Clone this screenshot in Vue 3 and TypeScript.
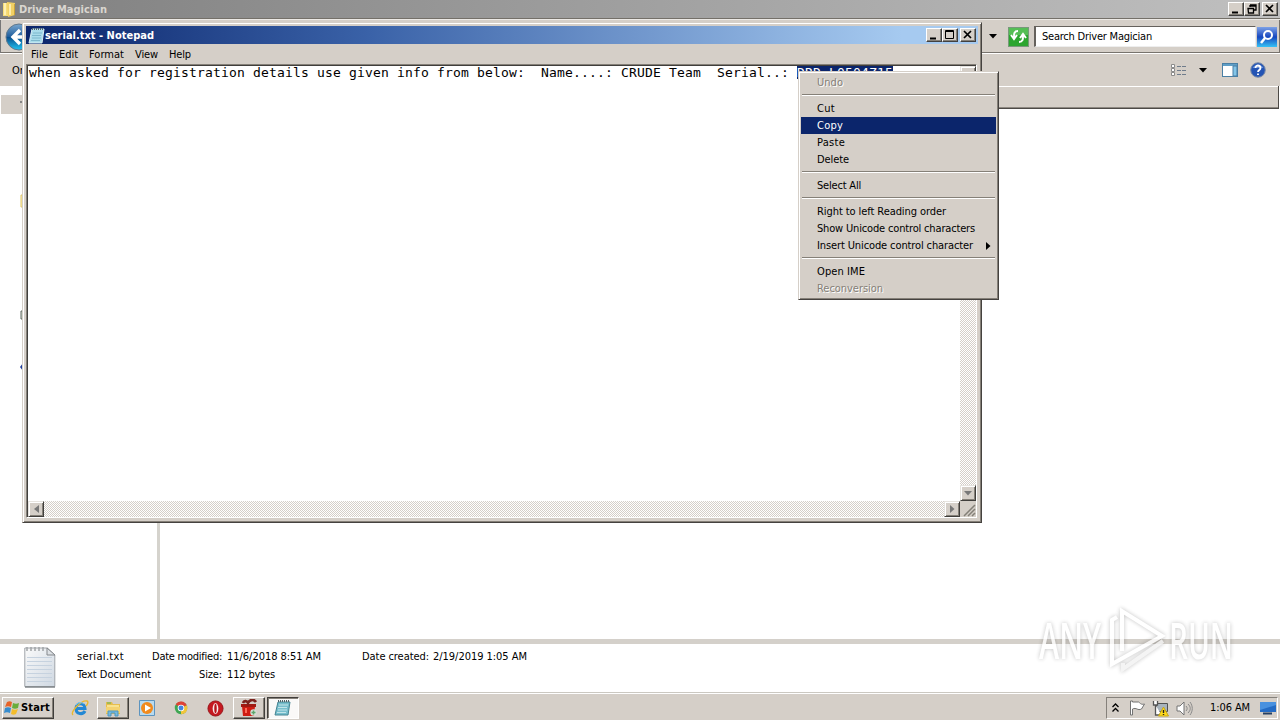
<script setup lang="ts">
interface MenuItem {
  label?: string
  width?: number
  state?: 'disabled' | 'active'
  submenu?: boolean
}

const contextMenu: MenuItem[] = [
  { label: 'Undo', width: 25, state: 'disabled' },
  {},
  { label: 'Cut', width: 17 },
  { label: 'Copy', width: 25, state: 'active' },
  { label: 'Paste', width: 27 },
  { label: 'Delete', width: 31 },
  {},
  { label: 'Select All', width: 43 },
  {},
  { label: 'Right to left Reading order', width: 128 },
  { label: 'Show Unicode control characters', width: 157 },
  { label: 'Insert Unicode control character', width: 155, submenu: true },
  {},
  { label: 'Open IME', width: 47 },
  { label: 'Reconversion', width: 65, state: 'disabled' },
]

const menuBar = [
  { label: 'File', width: 16 },
  { label: 'Edit', width: 18 },
  { label: 'Format', width: 34 },
  { label: 'View', width: 22 },
  { label: 'Help', width: 21 },
]

const bodyText =
  'when asked for registration details use given info from below:  Name....: CRUDE Team  Serial..: '
const selectedText = 'DRD-L0504Z15'

// Spreads letters so that a label takes the given width in pixels.
const vFit = {
  mounted(el: HTMLElement, binding: { value: number }) {
    const count = (el.textContent || '').length
    const natural = el.getBoundingClientRect().width
    el.style.letterSpacing = (binding.value + 1 - natural) / count + 'px'
  },
}
</script>

<template>
  <div class="screen">
    <section class="explorer">
      <header class="ex-title">
        <svg class="folder" width="14" height="16" viewBox="0 0 14 16">
          <path d="M1 2h5v13H1z" fill="#f6dc78" /><path d="M5 1l8 1v12l-7 2z" fill="#f1d064" />
          <path d="M3 2v12M8 3v11" stroke="#fff6c4" stroke-width="1.5" /><path d="M12.5 3v11" stroke="#c9a43c" />
        </svg>
        <b v-fit="87">Driver Magician</b>
        <div class="caps">
          <i class="cap"><svg width="16" height="14"><path d="M4 10.5h6" stroke="#000" stroke-width="2" /></svg></i>
          <i class="cap"><svg width="16" height="14"><path d="M6 3h6v5h-2M6 5V3M12 4H6M4 6.5h5.500V11h-5z" stroke="#000" fill="none" stroke-width="1.3" /></svg></i>
          <i class="cap gap"><svg width="16" height="14"><path d="M4 3l7 7M11 3l-7 7" stroke="#000" stroke-width="1.7" /></svg></i>
        </div>
      </header>
      <div class="ex-nav">
        <svg class="back" width="30" height="30" viewBox="0 0 30 30">
          <defs><linearGradient id="bk" x2="0" y2="1"><stop stop-color="#7aa8d0" /><stop offset=".48" stop-color="#215f9e" /><stop offset=".52" stop-color="#09508f" /><stop offset="1" stop-color="#22c5f3" /></linearGradient></defs>
          <circle cx="15" cy="15" r="13" fill="url(#bk)" stroke="#60788c" />
          <path d="M24 15H10M16 8l-7 7 7 7" stroke="#fff" stroke-width="3.400" fill="none" />
        </svg>
        <div class="nav-right">
          <svg class="drop" width="9" height="5"><path d="M0 0h8L4 4.500z" /></svg>
          <svg class="refresh" width="21" height="20" viewBox="0 0 21 20">
            <rect x=".5" y=".5" width="20" height="19" fill="#2ca52f" stroke="#77997a" />
            <path d="M1 1h19v7H1z" fill="#55be55" />
            <path d="M10 4C6 4 6 7 6 10M3 8l3 4 3-4M11 15c4 0 4-3 4-6M12 11l3-4 3 4" fill="none" stroke="#fff" stroke-width="2" />
          </svg>
          <div class="search"><span v-fit="109">Search Driver Magician</span></div>
          <svg class="go" width="20" height="20" viewBox="0 0 20 20">
            <defs><linearGradient id="go" x2="0" y2="1"><stop stop-color="#7da1e6" /><stop offset=".5" stop-color="#1747bf" /><stop offset="1" stop-color="#35c2f5" /></linearGradient></defs>
            <rect width="20" height="20" fill="url(#go)" /><circle cx="11" cy="8" r="4" fill="none" stroke="#fff" stroke-width="2" />
            <path d="M8 11l-4 5" stroke="#fff" stroke-width="2.500" />
          </svg>
        </div>
      </div>
      <div class="ex-tools">
        <span class="organize">Organize</span>
        <div class="tool-right">
          <svg width="16" height="13" viewBox="0 0 16 13">
            <path d="M.5 .5h3v3h-3zM.5 4.500h3v3h-3zM.5 8.500h3v3h-3z" fill="#fff" stroke="#8b8b8b" />
            <path d="M6 2.500h4M11 2.500h4M6 6.500h4M11 6.500h4M6 10.500h4M11 10.500h4" stroke="#6f7c8b" />
          </svg>
          <svg class="t-drop" width="9" height="5"><path d="M0 0h8L4 4.500z" /></svg>
          <svg class="t-pane" width="17" height="14" viewBox="0 0 17 14">
            <rect x=".5" y=".5" width="15" height="13" fill="#fff" stroke="#4a7fa4" /><path d="M1 2h14" stroke="#5f9ec6" stroke-width="2" /><path d="M11 3h4v10h-4z" fill="#83c5e8" stroke="#4a7fa4" />
          </svg>
          <svg width="16" height="16" viewBox="0 0 16 16">
            <circle cx="8" cy="8" r="7.300" fill="#2454b4" stroke="#7e8ea8" /><path d="M2.500 6a6 5 0 0 1 11 0z" fill="#6c92d8" />
            <path d="M5.500 6c0-3.500 5-3.200 5 0 0 2-2.500 2-2.500 4M8 11.500v1.500" stroke="#fff" fill="none" stroke-width="1.800" />
          </svg>
        </div>
      </div>
      <div class="ex-info"></div>
      <div class="ex-body">
        <aside class="tree">
          <i class="node"><i class="dot"></i></i>
          <svg class="bits" width="4" height="190" viewBox="0 0 4 190">
            <path d="M4 3H2v12h2" fill="#fff1b0" stroke="#dfc567" /><path d="M4 119H2v8h2" fill="#d6e0d4" stroke="#5b625b" /><path d="M4 171l-3 4 3 4z" fill="#1e3d9d" />
          </svg>
        </aside>
        <main class="files"></main>
      </div>
      <footer class="details">
        <svg class="doc" width="32" height="42" viewBox="0 0 32 42">
          <defs><linearGradient id="doc" x2="1" y2="1"><stop stop-color="#fafafa" /><stop offset="1" stop-color="#cfd8e2" /></linearGradient></defs>
          <path d="M.8 2h22.500l7.500 7v31.500H.8z" fill="url(#doc)" stroke="#9fa3a8" />
          <path d="M23 2v7h8z" fill="#dde1e5" stroke="#85898d" />
          <path d="M3 11.500h25M3 15.500h25M3 19.500h25M3 23.500h25M3 27.500h25M3 31.500h25M3 35.500h25" stroke="#c6d2df" />
          <path d="M3 1v4M7 1v4M11 1v4M15 1v4M19 1v4" stroke="#a1a5a8" stroke-width="1.500" /><path d="M1 41h30" stroke="#81868a" stroke-width="1.500" />
        </svg>
        <div class="col name"><span><em v-fit="46">serial.txt</em></span><span><em v-fit="73">Text Document</em></span></div>
        <div class="col keys"><span><em v-fit="69">Date modified:</em></span><span><em v-fit="22">Size:</em></span></div>
        <div class="col vals"><span><em v-fit="93">11/6/2018 8:51 AM</em></span><span><em v-fit="47">112 bytes</em></span></div>
        <div class="col keys2"><span><em v-fit="66">Date created:</em></span></div>
        <div class="col"><span><em v-fit="93">2/19/2019 1:05 AM</em></span></div>
      </footer>
    </section>

    <nav class="taskbar">
      <button class="start">
        <svg width="16" height="16" viewBox="0 0 16 16">
          <path d="M3 2c2-1 3-1 5 0L7 7c-2-1-4-1-6 0z" fill="#e76328" /><path d="M9 3c2 1 4 1 6 0l-1 5c-2 1-4 1-6 0z" fill="#69ad3b" />
          <path d="M1 8c2-1 4-1 6 0l-1 5c-2-1-4-1-6 0z" fill="#368cce" /><path d="M8 9c2 1 4 1 6 0l-2 5c-2 1-3 1-5 0z" fill="#f4bd2b" />
        </svg>
        <b v-fit="28">Start</b>
      </button>
      <div class="task ie">
        <svg width="18" height="18" viewBox="0 0 18 18">
          <path d="M14 12c-2 4-9 3.500-9-2.500s8.500-6.500 9 0H5" fill="none" stroke="#2388d4" stroke-width="3" />
          <path d="M2 16C-1 13 10 1 16 2c2 1 0 4-1 5" fill="none" stroke="#e9b82d" stroke-width="1.400" /><path d="M5 6c2-3 6-3 8-1" stroke="#75c9f1" fill="none" />
        </svg>
      </div>
      <div class="task raised">
        <svg width="18" height="18" viewBox="0 0 18 18">
          <path d="M2 3h6l1 2h7v10H2z" fill="#e7bd4d" /><path d="M3 6h12v8H3z" fill="#f8e28f" /><path d="M2 8h14v6H2z" fill="#f4d270" />
          <path d="M4 17v-5h10v5h-3v-3H7v3z" fill="#75b9df" stroke="#4c95bd" /><path d="M3 4h4" stroke="#5db45b" />
        </svg>
      </div>
      <div class="task">
        <svg width="18" height="18" viewBox="0 0 18 18">
          <path d="M1.500 1.500h15v15h-15z" fill="#b8daef" stroke="#5d94bf" /><circle cx="9" cy="9" r="6" fill="#f18a1d" /><path d="M7 5.500l6 3.500-6 3.500z" fill="#fff" />
        </svg>
      </div>
      <div class="task">
        <svg width="16" height="16" viewBox="0 0 18 18">
          <circle cx="9" cy="9" r="7" fill="#3fa652" /><path d="M9 9L3 5a7 7 0 0 1 12.500 1z" fill="#de4337" /><path d="M9 9l6.500-3A7 7 0 0 1 9 16z" fill="#f1c53b" />
          <circle cx="9" cy="9" r="3.700" fill="#fff" /><circle cx="9" cy="9" r="2.800" fill="#4385df" />
        </svg>
      </div>
      <div class="task">
        <svg width="17" height="17" viewBox="0 0 18 18">
          <circle cx="9" cy="9" r="8" fill="#c51920" stroke="#951318" /><ellipse cx="9" cy="9" rx="3" ry="5.800" fill="#f8eeee" /><ellipse cx="9" cy="9" rx="1.300" ry="5" fill="#b5141a" />
        </svg>
      </div>
      <div class="task raised">
        <svg width="18" height="18" viewBox="0 0 18 18">
          <path d="M2 7h13l-1 10H3z" fill="#cf1c12" /><path d="M1 5h15v3H1z" fill="#a01a12" /><path d="M3 4c1-3 4-2 5 0 2-4 6-4 8-1" stroke="#7b241e" stroke-width="2.600" fill="none" />
          <path d="M6 9v5" stroke="#ff6b57" stroke-width="2" /><circle cx="13.500" cy="13.500" r="3.200" fill="#d6dfd7" /><path d="M11.500 13.500h4M13.500 11.500v4" stroke="#5ca46a" stroke-width="1.500" />
        </svg>
      </div>
      <div class="task pressed">
        <svg width="18" height="18" viewBox="0 0 18 18">
          <path d="M4 3h12l-2 13H1z" fill="#78bfcd" stroke="#448492" /><path d="M5 6h9M4 8.500h9M4 11h9M3 13.500h9" stroke="#c2e4e9" /><path d="M4 2h12" stroke="#506267" stroke-width="2" stroke-dasharray="1 1" />
        </svg>
      </div>
      <div class="tray">
        <svg class="chev" width="7" height="10"><path d="M.5 4l3-3 3 3M.5 8.500l3-3 3 3" fill="none" stroke="#000" stroke-width="1.300" /></svg>
        <svg class="flag" width="17" height="16" viewBox="0 0 17 16"><path d="M1.500 1v14h2V9c4-2 5 2 9 0l3-5c-4 1-4-1-6-2H3.500V1z" fill="#fff" stroke="#737373" /></svg>
        <svg class="net" width="17" height="17" viewBox="0 0 17 17">
          <path d="M4.500 3.500h11v8h-11z" fill="#a8b3bc" stroke="#515151" /><path d="M1.500 1v4h4V1M3.500 5v10h6" fill="#fff" stroke="#555" stroke-width="1.300" /><path d="M11.500 7l5 9h-10z" fill="#ffd91c" stroke="#c6a616" /><path d="M11.500 10v3M11.500 14v1" stroke="#222" stroke-width="1.400" />
        </svg>
        <svg class="vol" width="17" height="15" viewBox="0 0 17 15"><path d="M1 5h3l4-4v13l-4-4H1z" fill="#fff" stroke="#737373" /><path d="M10 5c1.500 1.500 1.500 3.500 0 5M12 3c3 3 3 6 0 9M14 1c3 4 3 9 0 13" fill="none" stroke="#898989" /></svg>
        <span v-fit="39">1:06 AM</span>
        <svg class="desk" width="16" height="14" viewBox="0 0 16 14"><path d="M0 1h16v10H0z" fill="#246bc4" /><path d="M0 1h16v3L0 9z" fill="#4991df" /><path d="M3 12.500h9" stroke="#243f63" stroke-width="2" /></svg>
      </div>
    </nav>

    <section class="notepad">
      <header class="np-title">
        <svg width="17" height="17" viewBox="0 0 17 17">
          <path d="M4 2h12l-2 14H1z" fill="#a9dceb" stroke="#d9eef4" /><path d="M5 6h9M4 8.500h9M4 11h9M3 13.500h9" stroke="#7db8cd" /><path d="M4 2h12" stroke="#4d626a" stroke-width="2" stroke-dasharray="1 1" />
        </svg>
        <b v-fit="108">serial.txt - Notepad</b>
        <div class="caps">
          <i class="cap"><svg width="16" height="14"><path d="M4 10.500h6" stroke="#000" stroke-width="2" /></svg></i>
          <i class="cap"><svg width="16" height="14"><path d="M3.500 2.500h8v8h-8zM3 3.500h9" stroke="#000" fill="none" /></svg></i>
          <i class="cap gap"><svg width="16" height="14"><path d="M4 3l7 7M11 3l-7 7" stroke="#000" stroke-width="1.700" /></svg></i>
        </div>
      </header>
      <div class="np-menu"><div v-for="m in menuBar" :key="m.label"><span v-fit="m.width">{{ m.label }}</span></div></div>
      <div class="np-client">
        <div class="np-text"><span>{{ bodyText }}</span><span class="sel">{{ selectedText }}</span></div>
        <div class="track vert">
          <i class="arrow"><svg width="8" height="5"><path d="M0 5h8L4 0z" fill="#777" /></svg></i>
          <i class="arrow"><svg width="8" height="5"><path d="M0 0h8L4 4.500z" fill="#777" /></svg></i>
        </div>
        <div class="track horz">
          <i class="arrow"><svg width="5" height="8"><path d="M5 0v8L0 4z" fill="#777" /></svg></i>
          <i class="arrow"><svg width="5" height="8"><path d="M0 0v8l4.500-4z" fill="#777" /></svg></i>
        </div>
        <div class="grip"><svg width="16" height="16"><path d="M4 15L15 4M8 15l7-7M12 15l3-3" stroke="#848078" stroke-width="1.500" /></svg></div>
      </div>
    </section>

    <ul class="context">
      <template v-for="(item, n) in contextMenu" :key="n">
        <li v-if="item.label" class="item" :class="item.state">
          <span v-fit="item.width">{{ item.label }}</span>
          <svg v-if="item.submenu" width="5" height="8"><path d="M0 0v8l4.500-4z" /></svg>
        </li>
        <li v-else class="sep"></li>
      </template>
    </ul>

    <svg class="mark" width="210" height="76" viewBox="0 0 210 76">
      <g class="mark-ink">
        <text x="4" y="54" textLength="62" lengthAdjust="spacingAndGlyphs">ANY</text>
        <text x="134" y="54" textLength="64" lengthAdjust="spacingAndGlyphs">RUN</text>
        <path d="M82 12l-5 3v44l50-28L87 6v40" fill="none" stroke="#fff" stroke-width="4" />
        <path d="M88 58v6l40-28" fill="none" stroke="#f2f2f2" stroke-width="4" />
      </g>
    </svg>
  </div>
</template>

<style>
html, body { margin: 0; overflow: hidden; }
</style>

<style scoped>
.screen { position: relative; width: 1280px; height: 720px; overflow: hidden; display: flex; flex-direction: column; background: #fff; color: #000; font: 11px/17px "DejaVu Sans Condensed", "DejaVu Sans", sans-serif; font-stretch: condensed; }
.screen * { box-sizing: border-box; }
span, b, em { white-space: pre; font-style: normal; }
svg { display: block; flex: none; }
i { display: block; flex: none; }
.explorer { flex: 1; display: flex; flex-direction: column; min-height: 0; }
.ex-title { height: 18px; flex: none; display: flex; align-items: center; padding: 0 2px 0 2px; background: linear-gradient(90deg, #808080, #c0c0c0); color: #dad6d0; }
.ex-title b { margin-left: 3px; }
.caps { display: flex; margin-left: auto; }
.cap { width: 16px; height: 14px; background: #d5cfc8; border: 1px solid; border-color: #fff #404040 #404040 #fff; box-shadow: inset -1px -1px #858078; overflow: hidden; }
.cap svg { margin: -1px; }
.cap.gap { margin-left: 2px; }
.ex-nav { height: 36px; flex: none; display: flex; justify-content: space-between; background: #d5cfc8; border-top: 1px solid #747069; border-bottom: 1px solid #fff; box-shadow: inset 0 1px #ece9e5, inset 1px 0 #777, inset -1px -1px #77736d; }
.back { margin: 3px 0 0 4px; }
.nav-right { display: flex; align-items: center; margin-right: 3px; padding-top: 1px; }
.drop { margin-right: 10px; }
.refresh { margin-right: 5px; }
.search { width: 222px; height: 21px; background: #fff; border: 1px solid; border-color: #65615c #eee #eee #65615c; border-left-width: 2px; padding: 2px 0 0 6px; line-height: 16px; }
.go { margin-left: 1px; }
.ex-tools { height: 32px; flex: none; display: flex; align-items: center; justify-content: space-between; background: #d5cfc8; }
.organize { margin-left: 12px; }
.tool-right { display: flex; align-items: center; margin-right: 14px; }
.t-drop { margin: 0 14px 0 12px; }
.t-pane { margin-right: 11px; }
.ex-info { height: 23px; flex: none; margin-right: 1px; background: #d5cfc8; border: solid #4d4a46; border-width: 0 1px 1px 0; box-shadow: inset 0 1px #fff, inset 0 -1px #8d8881; }
.ex-body { flex: 1; display: flex; min-height: 0; }
.tree { width: 160px; background: #fff; border-right: 3px solid #d5d3cd; margin-top: -22px; padding: 8px 0 0 1px; height: 552px; }
.files { flex: 1; }
.node { width: 30px; height: 19px; background: #d5cfc8; padding-top: 6px; }
.dot { width: 2px; height: 2px; background: #858585; margin-left: 19px; }
.bits { margin: 78px 0 0 18px; }
.details { height: 54px; flex: none; display: flex; border-top: 5px solid #d4d0ca; border-bottom: 1px solid #cbc8c1; background: #fff; }
.doc { margin: 2px 0 0 24px; }
.col { display: flex; flex-direction: column; padding-top: 4px; }
.col span { height: 18px; line-height: 18px; }
.name { width: 76px; margin-left: 21px; }
.keys { width: 69px; align-items: flex-end; }
.vals { width: 140px; padding-left: 5px; }
.keys2 { width: 71px; }
.taskbar { height: 27px; flex: none; display: flex; align-items: center; background: #d5cfc8; border-top: 1px solid #fff; padding: 2px 2px 0; }
.start { width: 52px; height: 22px; display: flex; align-items: center; padding: 0 0 0 1px; font: bold 11px/16px "DejaVu Sans Condensed", "DejaVu Sans", sans-serif; color: #000; background: #d5cfc8; border: 1px solid; border-color: #fff #403e3b #403e3b #fff; box-shadow: inset -1px -1px #858078; margin-right: 9px; }
.start svg { margin-right: 1px; }
.task { width: 32px; height: 22px; margin-right: 2px; display: flex; align-items: center; justify-content: center; border: 1px solid transparent; }
.task.ie { padding-left: 2px; }
.task.raised { border-color: #fff #403e3b #403e3b #fff; box-shadow: inset -1px -1px #858078; }
.task.pressed { background: #faf9f8; border-color: #403e3b #fff #fff #403e3b; box-shadow: inset 1px 1px #858078; }
.tray { width: 172px; height: 22px; margin-left: auto; display: flex; align-items: center; border: 1px solid; border-color: #85817b #fff #fff #85817b; }
.chev { margin-left: 5px; }
.flag { margin-left: 10px; }
.net { margin-left: 6px; }
.vol { margin-left: 7px; }
.tray span { margin-left: 17px; line-height: 15px; padding-bottom: 2px; }
.desk { margin-left: 10px; }
.notepad { position: absolute; left: 22px; top: 22px; width: 960px; height: 501px; display: flex; flex-direction: column; background: #d5cfc8; border: 1px solid; border-color: #d5cfc8 #45423f #45423f #d5cfc8; box-shadow: inset 1px 1px #fff, inset -1px -1px #858078; padding: 3px; }
.np-title { height: 18px; flex: none; display: flex; align-items: center; background: linear-gradient(90deg, #0b256b, #3a62a8 36%, #a6caf0 92%); color: #fff; padding: 0 2px 0 2px; }
.np-menu { height: 20px; flex: none; display: flex; padding: 0 0 0 5px; line-height: 21px; gap: 11px; }
.np-client { flex: 1; display: grid; grid-template-columns: 1fr 16px; grid-template-rows: 1fr 16px; border: 1px solid; border-color: #858078 #fff #fff #858078; box-shadow: inset 1px 1px #403e3b; padding: 1px 0 0 1px; background: #fff; margin: 0 1px 1px 0; }
.np-text { overflow: hidden; padding-left: 1px; font: 13px/13px "DejaVu Sans Mono", monospace; letter-spacing: .174px; white-space: pre; }
.sel { background: #0b256b; color: #fff; display: inline-block; height: 13px; }
.track { display: flex; justify-content: space-between; background: repeating-conic-gradient(#d5cfc8 0 25%, #fff 0 50%) 0 0 / 2px 2px; }
.vert { flex-direction: column; }
.arrow { width: 16px; height: 16px; display: flex; align-items: center; justify-content: center; background: #d5cfc8; border: 1px solid; border-color: #e7e4df #403e3b #403e3b #e7e4df; box-shadow: inset 1px 1px #fff, inset -1px -1px #858078; }
.grip { background: #d5cfc8; }
.context { position: absolute; left: 798px; top: 71px; width: 201px; height: 229px; margin: 0; padding: 2px 2px 2px; list-style: none; background: #d5cfc8; border: 1px solid; border-color: #d5cfc8 #45423f #45423f #d5cfc8; box-shadow: inset 1px 1px #fff, inset -1px -1px #858078; }
.item { height: 17px; line-height: 17px; padding-left: 16px; display: flex; align-items: center; }
.item svg { margin-left: auto; margin-right: 5px; }
.item.active { background: #0b256b; color: #fff; }
.item.disabled { color: #858078; text-shadow: 1px 1px #fff; }
.sep { height: 9px; padding: 3px 1px 0; }
.sep::before { content: ""; display: block; height: 1px; background: #858078; border-bottom: 1px solid #fff; }
.mark { position: absolute; left: 1035px; top: 605px; overflow: visible; }
.mark-ink { filter: drop-shadow(0 0 2px rgba(0, 0, 0, .3)); opacity: .8; fill: #fff; font: 600 50px "Open Sans", sans-serif; }
</style>
